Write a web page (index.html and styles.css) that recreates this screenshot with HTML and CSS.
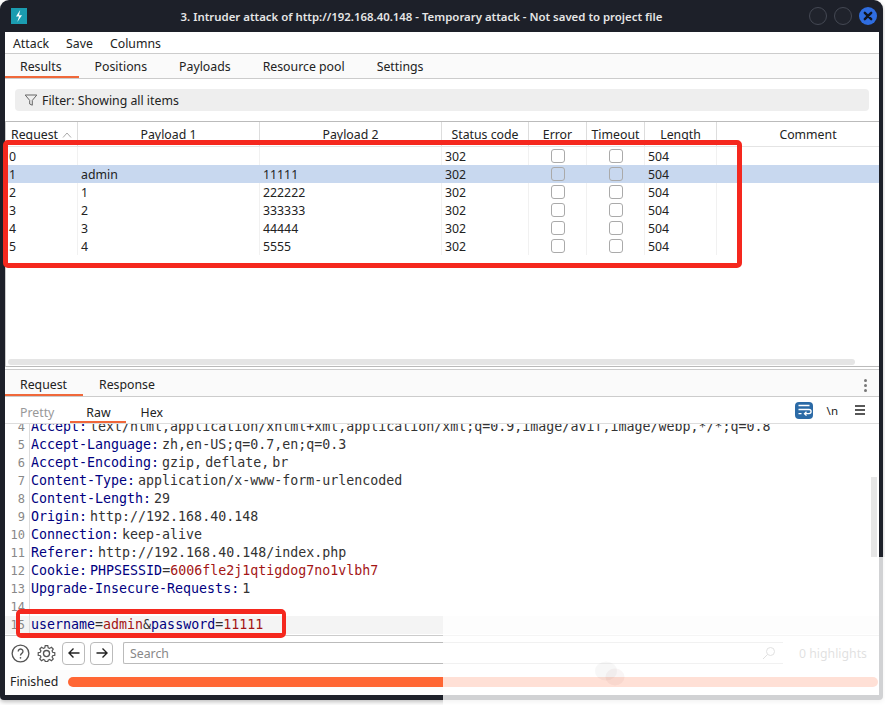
FILE: index.html
```html
<!DOCTYPE html>
<html lang="en">
<head>
<meta charset="utf-8">
<title>Intruder attack</title>
<link rel="stylesheet" href="styles.css">
</head>
<body>
<div class="window">
  <header class="titlebar">
    <span class="app-icon"><svg viewBox="0 0 16 16" width="16" height="16"><path d="M9.200 2 5 8.400h3L6.300 14l4.700-6.700H8z" fill="#fff"/></svg></span>
    <h1 class="title">3. Intruder attack of http://192.168.40.148 - Temporary attack - Not saved to project file</h1>
    <div class="win-buttons">
      <span class="win-btn"></span>
      <span class="win-btn"></span>
      <span class="win-btn close"><svg viewBox="0 0 18 18" width="18" height="18"><path d="M5.800 5.800l6.400 6.400M12.200 5.800l-6.400 6.400" stroke="#10151f" stroke-width="2.400" stroke-linecap="round"/></svg></span>
    </div>
  </header>
  <div class="content">
    <nav class="menu"><span>Attack</span><span>Save</span><span>Columns</span></nav>
    <nav class="tabs main-tabs">
      <span class="tab active">Results</span><span class="tab">Positions</span><span class="tab">Payloads</span><span class="tab">Resource pool</span><span class="tab">Settings</span>
    </nav>
    <div class="filter-wrap">
      <div class="filter">
        <svg viewBox="0 0 14 14" width="14" height="14"><path d="M1.200 2h11.600L8.300 7.400v4.800L5.700 11V7.400z" fill="none" stroke="#666" stroke-width="1"/></svg>
        <span>Filter: Showing all items</span>
      </div>
    </div>
    <section class="results">
      <div class="row head">
        <div class="hcell sort">Request <svg viewBox="0 0 10 6" width="10" height="6"><path d="M1 5.500 5 1l4 4.500" fill="none" stroke="#aaa"/></svg></div>
        <div class="hcell">Payload 1</div><div class="hcell">Payload 2</div><div class="hcell">Status code</div><div class="hcell">Error</div><div class="hcell">Timeout</div><div class="hcell">Length</div><div class="hcell">Comment</div>
      </div>
      <div class="row"><div class="cell">0</div><div class="cell"></div><div class="cell"></div><div class="cell">302</div><div class="cell c"><i class="check"></i></div><div class="cell c"><i class="check"></i></div><div class="cell">504</div><div class="cell"></div></div>
      <div class="row selected"><div class="cell">1</div><div class="cell">admin</div><div class="cell">11111</div><div class="cell">302</div><div class="cell c"><i class="check"></i></div><div class="cell c"><i class="check"></i></div><div class="cell">504</div><div class="cell"></div></div>
      <div class="row"><div class="cell">2</div><div class="cell">1</div><div class="cell">222222</div><div class="cell">302</div><div class="cell c"><i class="check"></i></div><div class="cell c"><i class="check"></i></div><div class="cell">504</div><div class="cell"></div></div>
      <div class="row"><div class="cell">3</div><div class="cell">2</div><div class="cell">333333</div><div class="cell">302</div><div class="cell c"><i class="check"></i></div><div class="cell c"><i class="check"></i></div><div class="cell">504</div><div class="cell"></div></div>
      <div class="row"><div class="cell">4</div><div class="cell">3</div><div class="cell">44444</div><div class="cell">302</div><div class="cell c"><i class="check"></i></div><div class="cell c"><i class="check"></i></div><div class="cell">504</div><div class="cell"></div></div>
      <div class="row"><div class="cell">5</div><div class="cell">4</div><div class="cell">5555</div><div class="cell">302</div><div class="cell c"><i class="check"></i></div><div class="cell c"><i class="check"></i></div><div class="cell">504</div><div class="cell"></div></div>
      <div class="hscroll"></div>
    </section>
    <nav class="tabs req-tabs">
      <span class="tab active">Request</span><span class="tab">Response</span>
      <span class="kebab"><i></i><i></i><i></i></span>
    </nav>
    <nav class="tabs sub-tabs">
      <span class="tab dim">Pretty</span><span class="tab active">Raw</span><span class="tab">Hex</span>
      <span class="sub-tools">
        <span class="wrap-btn"><svg viewBox="0 0 18 18" width="18" height="18"><path d="M3.500 4.500h11M3.500 8.500h10.500a1.800 1.800 0 0 1 0 4.200H9.500M11.500 10.800l-2 1.900 2 1.900M3.500 12.700h3" fill="none" stroke="#fff" stroke-width="1.300"/></svg></span>
        <span class="nl">\n</span>
        <svg class="burger" viewBox="0 0 10 10" width="10" height="10"><path d="M0 1h10M0 5h10M0 9h10" stroke="#222" stroke-width="1.300"/></svg>
      </span>
    </nav>
    <div class="editor">
      <div class="lines">
        <div class="line"><span class="no">4</span><code><b>Accept:</b> text/html,application/xhtml+xml,application/xml;q=0.9,image/avif,image/webp,*/*;q=0.8</code></div>
        <div class="line"><span class="no">5</span><code><b>Accept-Language:</b> zh,en-US;q=0.7,en;q=0.3</code></div>
        <div class="line"><span class="no">6</span><code><b>Accept-Encoding:</b> gzip, deflate, br</code></div>
        <div class="line"><span class="no">7</span><code><b>Content-Type:</b> application/x-www-form-urlencoded</code></div>
        <div class="line"><span class="no">8</span><code><b>Content-Length:</b> 29</code></div>
        <div class="line"><span class="no">9</span><code><b>Origin:</b> http://192.168.40.148</code></div>
        <div class="line"><span class="no">10</span><code><b>Connection:</b> keep-alive</code></div>
        <div class="line"><span class="no">11</span><code><b>Referer:</b> http://192.168.40.148/index.php</code></div>
        <div class="line"><span class="no">12</span><code><b>Cookie:</b> <b>PHPSESSID</b>=<em>6006fle2j1qtigdog7no1vlbh7</em></code></div>
        <div class="line"><span class="no">13</span><code><b>Upgrade-Insecure-Requests:</b> 1</code></div>
        <div class="line"><span class="no">14</span><code></code></div>
        <div class="line current"><span class="no">15</span><code><b>username</b>=<em>admin</em>&amp;<b>password</b>=<em>11111</em></code></div>
      </div>
      <div class="vscroll"></div>
    </div>
    <div class="toolbar">
      <svg viewBox="0 0 20 20" width="19" height="19"><circle cx="10" cy="10" r="8.800" fill="none" stroke="#555" stroke-width="1.400"/><path d="M7.600 7.800a2.500 2.500 0 1 1 3.800 2.100c-.9.600-1.400 1-1.400 2.100" fill="none" stroke="#555" stroke-width="1.400"/><circle cx="10" cy="14.600" r=".9" fill="#555"/></svg>
      <svg class="gear" viewBox="0 0 20 20" width="19" height="19"><path d="M8.500 1.300h3l.5 2.500 1.600.7 2.200-1.400 2.100 2.100-1.400 2.200.7 1.600 2.500.5v3l-2.500.5-.7 1.600 1.400 2.200-2.100 2.100-2.200-1.400-1.600.7-.5 1.600h-3l-.5-1.600-1.600-.7-2.200 1.400-2.100-2.100 1.400-2.200-.7-1.600-2.500-.5v-3l2.500-.5.7-1.600-1.400-2.200 2.100-2.100 2.200 1.400 1.600-.7z" transform="translate(1 .6) scale(.9)" fill="none" stroke="#555" stroke-width="1.400"/><circle cx="10" cy="10" r="3.200" fill="none" stroke="#555" stroke-width="1.400"/></svg>
      <span class="nav-btn"><svg viewBox="0 0 14 14" width="14" height="14"><path d="M12.500 7H2M6.500 2.500 2 7l4.500 4.500" fill="none" stroke="#222" stroke-width="1.400"/></svg></span>
      <span class="nav-btn"><svg viewBox="0 0 14 14" width="14" height="14"><path d="M1.500 7H12M7.500 2.500 12 7l-4.500 4.500" fill="none" stroke="#222" stroke-width="1.400"/></svg></span>
      <div class="search"><span>Search</span></div>
      <svg class="lens" viewBox="0 0 14 14" width="14" height="14"><circle cx="8.500" cy="5.500" r="4" fill="none" stroke="#666"/><path d="M5.500 8.500 1 13" stroke="#666"/></svg>
      <span class="hits">0 highlights</span>
    </div>
    <div class="status">
      <span>Finished</span>
      <div class="progress"></div>
    </div>
  </div>
</div>
<div class="mark box-results"></div>
<div class="mark box-body"></div>
<div class="veil"></div>
<div class="watermark">
  <svg viewBox="0 0 30 26" width="30" height="26"><ellipse cx="11" cy="10" rx="11" ry="9.500" fill="#000" fill-opacity=".03"/><ellipse cx="20" cy="16" rx="9.500" ry="8.500" fill="#600" fill-opacity=".04"/></svg>
  <span>公众号 · 信安一把索</span>
</div>
</body>
</html>
```
FILE: styles.css
```css
* { box-sizing: border-box; }
html, body { margin: 0; height: 100%; }
body {
  position: relative;
  width: 885px;
  height: 705px;
  overflow: hidden;
  background: #fff;
  font-family: "Noto Sans", sans-serif;
  font-size: 12.3px;
  color: #222;
}
.window {
  display: flex;
  flex-direction: column;
  width: 883px;
  height: 700px;
  padding: 0 4px 5px 5px;
  background: #1d2029;
  border-radius: 9px 9px 4px 4px;
  box-shadow: 0 2px 4px rgba(0,0,0,.25);
}
.titlebar {
  position: relative;
  flex: none;
  display: flex;
  align-items: center;
  height: 32px;
  margin-left: -5px;
  padding-left: 11px;
}
.app-icon {
  display: flex;
  width: 16px;
  height: 16px;
  background: #1b9cb0;
}
.title {
  flex: 1;
  margin: 0;
  padding-left: 7px;
  text-align: center;
  font-size: 11.4px;
  font-weight: 600;
  color: #e6e6e6;
  white-space: nowrap;
}
.win-buttons { display: flex; gap: 7px; margin-right: 2px; }
.win-btn {
  display: flex;
  width: 18px;
  height: 18px;
  border-radius: 50%;
  background: #20232c;
  border: 1px solid #444853;
}
.win-btn.close { background: #2f6de0; border: 0; }
.content {
  flex: 1;
  min-height: 0;
  display: flex;
  flex-direction: column;
  background: #fff;
}
.menu {
  flex: none;
  display: flex;
  gap: 17px;
  align-items: center;
  height: 22px;
  padding: 2px 0 0 8px;
  border-bottom: 1px solid #ccc;
}
.tabs {
  flex: none;
  display: flex;
  align-items: stretch;
  background: #fafafa;
  border-bottom: 1px solid #ccc;
}
.tab {
  display: flex;
  align-items: center;
  padding: 2px 16px 0;
  border-bottom: 2px solid transparent;
}
.tab.active { border-bottom-color: #f0683a; }
.tab.dim { color: #999; }
.main-tabs { height: 25px; }
.main-tabs .tab:first-child { padding-left: 15px; padding-right: 17px; }
.filter-wrap { flex: none; padding: 10px 10px 10px; background: #fff; }
.filter {
  display: flex;
  align-items: center;
  gap: 4px;
  height: 22px;
  padding-left: 9px;
  background: #eeeeee;
  border-radius: 4px;
}
.results {
  flex: none;
  position: relative;
  height: 246px;
  margin-bottom: 2px;
  overflow: hidden;
  border-top: 1px solid #bbb;
  border-bottom: 1px solid #bbb;
  border-left: 1px solid #ccc;
}
.row {
  display: grid;
  grid-template-columns: 72px 182px 182px 87px 58px 58px 72px 182px;
  height: 18px;
}
.row.head { height: 25px; border-bottom: 1px solid #e4e4e4; }
.row.selected { background: #c8d8ef; }
.hcell {
  display: flex;
  align-items: center;
  justify-content: center;
  gap: 4px;
  padding-top: 1px;
  border-right: 1px solid #ddd;
  white-space: nowrap;
}
.hcell:last-child { border-right: 0; }
.cell {
  display: flex;
  align-items: center;
  padding-left: 3px;
  border-right: 1px solid #f1f1f1;
}
.selected .cell { border-right-color: transparent; }
.cell.c { justify-content: center; padding-left: 0; }
.cell:last-child { border-right: 0; }
.check {
  display: block;
  width: 14px;
  height: 14px;
  border: 1px solid #aaa;
  border-radius: 3px;
}
.hscroll {
  position: absolute;
  left: 2px;
  width: 847px;
  bottom: 1px;
  height: 6px;
  border-radius: 3px;
  background: #e5e5e5;
}
.req-tabs { position: relative; height: 28px; border-top: 1px solid #ccc; }
.req-tabs .tab { padding-top: 4px; }
.req-tabs .tab:first-child { padding-right: 16px; padding-left: 15px; }
.kebab {
  position: absolute;
  right: 12px;
  top: 9px;
  display: flex;
  flex-direction: column;
  gap: 2px;
}
.kebab i { width: 3px; height: 3px; border-radius: 50%; background: #777; }
.sub-tabs { height: 27px; background: #fff; border-bottom: 1px solid #ddd; }
.sub-tabs .tab { padding: 6px 15px 0; }
.sub-tabs .tab.dim { padding-right: 16px; }
.sub-tabs .tab.active { padding-left: 16px; }
.sub-tools {
  display: flex;
  align-items: center;
  margin-left: auto;
  padding-right: 14px;
}
.wrap-btn {
  display: flex;
  width: 18px;
  height: 17px;
  align-items: center;
  background: #2b6aa6;
  border-radius: 4px;
}
.nl { margin-left: 14px; font-size: 11.5px; }
.burger { margin-left: 17px; }
.editor { position: relative; flex: 1; min-height: 0; overflow: hidden; }
.lines { margin-top: -6px; }
.line { display: flex; height: 18px; line-height: 18px; }
.line.current { background: #f4f4f4; }
.no {
  flex: none;
  width: 20px;
  margin-right: 4px;
  text-align: right;
  font-family: "DejaVu Sans Mono", monospace;
  font-size: 12px;
  color: #888;
}
code {
  font-family: "DejaVu Sans Mono", monospace;
  font-size: 13.3px;
  word-spacing: -5px;
  color: #333;
  white-space: pre;
  padding-left: 1px;
  border-left: 1px solid #ddd;
}
code b { font-weight: 400; color: #000080; }
code em { font-style: normal; color: #a31515; }
.vscroll {
  position: absolute;
  right: 2px;
  top: 53px;
  width: 6px;
  height: 80px;
  background: #e6e6e6;
}
.toolbar {
  flex: none;
  display: flex;
  align-items: center;
  gap: 6px;
  height: 35px;
  padding-left: 6px;
  border-top: 1px solid #ccc;
}
.toolbar svg { flex: none; }
.toolbar .gear { margin-left: 1px; }
.nav-btn {
  display: flex;
  align-items: center;
  justify-content: center;
  width: 23px;
  height: 23px;
  border: 1px solid #bbb;
  border-radius: 4px;
}
.nav-btn + .nav-btn { margin-left: -1px; }
.search {
  width: 660px;
  height: 22px;
  margin-left: 4px;
  padding-left: 6px;
  display: flex;
  align-items: center;
  color: #888;
  border: 1px solid #bbb;
  border-right: 0;
  border-radius: 2px 0 0 2px;
}
.toolbar .lens { margin-left: -27px; }
.hits { margin-left: 17px; color: #666; white-space: nowrap; }
.status {
  flex: none;
  display: flex;
  align-items: center;
  gap: 10px;
  height: 25px;
  padding: 0 1px 2px 5px;
  background: #fcfcfc;
}
.progress {
  flex: 1;
  height: 10px;
  border-radius: 5px;
  background: #ff6633;
}
.mark {
  position: absolute;
  border-style: solid;
  border-color: #f5281e;
  border-radius: 5px;
}
.box-results { left: 3px; top: 140px; width: 739px; height: 128px; border-width: 5px; }
.box-body { left: 16px; top: 609px; width: 270px; height: 29px; border-width: 5px 4px; }
.veil {
  position: absolute;
  left: 443px;
  top: 557px;
  right: 0;
  bottom: 0;
  background: rgba(255,255,255,.8);
}
.watermark {
  position: absolute;
  left: 595px;
  top: 661px;
  display: flex;
  align-items: center;
  gap: 12px;
  font-family: "Noto Sans CJK SC", sans-serif;
  font-size: 22px;
  line-height: 22px;
  color: rgba(0,0,0,.025);
  white-space: nowrap;
}
```
